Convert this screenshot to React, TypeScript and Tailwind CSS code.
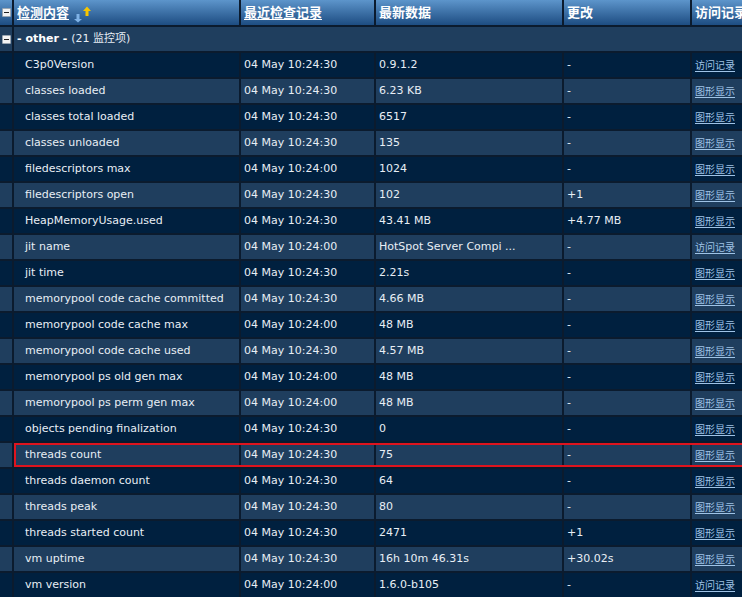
const rows: [string, string, string, string, string][] = [
  ["C3p0Version", "04 May 10:24:30", "0.9.1.2", "-", "访问记录"],
  ["classes loaded", "04 May 10:24:30", "6.23 KB", "-", "图形显示"],
  ["classes total loaded", "04 May 10:24:30", "6517", "-", "图形显示"],
  ["classes unloaded", "04 May 10:24:30", "135", "-", "图形显示"],
  ["filedescriptors max", "04 May 10:24:00", "1024", "-", "图形显示"],
  ["filedescriptors open", "04 May 10:24:30", "102", "+1", "图形显示"],
  ["HeapMemoryUsage.used", "04 May 10:24:30", "43.41 MB", "+4.77 MB", "图形显示"],
  ["jit name", "04 May 10:24:00", "HotSpot Server Compi ...", "-", "访问记录"],
  ["jit time", "04 May 10:24:30", "2.21s", "-", "图形显示"],
  ["memorypool code cache committed", "04 May 10:24:30", "4.66 MB", "-", "图形显示"],
  ["memorypool code cache max", "04 May 10:24:00", "48 MB", "-", "图形显示"],
  ["memorypool code cache used", "04 May 10:24:30", "4.57 MB", "-", "图形显示"],
  ["memorypool ps old gen max", "04 May 10:24:00", "48 MB", "-", "图形显示"],
  ["memorypool ps perm gen max", "04 May 10:24:00", "48 MB", "-", "图形显示"],
  ["objects pending finalization", "04 May 10:24:30", "0", "-", "图形显示"],
  ["threads count", "04 May 10:24:30", "75", "-", "图形显示"],
  ["threads daemon count", "04 May 10:24:30", "64", "-", "图形显示"],
  ["threads peak", "04 May 10:24:30", "80", "-", "图形显示"],
  ["threads started count", "04 May 10:24:30", "2471", "+1", "图形显示"],
  ["vm uptime", "04 May 10:24:30", "16h 10m 46.31s", "+30.02s", "图形显示"],
  ["vm version", "04 May 10:24:00", "1.6.0-b105", "-", "访问记录"],
];

const font = "font-['DejaVu_Sans','Noto_Sans_CJK_SC',sans-serif]";

function Toggle() {
  return (
    <span className="flex h-[9px] w-[9px] items-center justify-center rounded-[1px] border border-[#9aa6b2] bg-[#f4f4f4]">
      <span className="h-[1px] w-[5px] bg-[#222]" />
    </span>
  );
}

function SortArrows() {
  return (
    <svg width="18" height="18" viewBox="0 0 18 18" className="ml-[5px] mt-[2px]">
      <path d="M2.5 9h3v5h2.5L4 17.5 0 14h2.5z" fill="#7fb2e6" />
      <path d="M11.5 11h3V6H17L13 1.5 9 6h2.5z" fill="#f7c600" />
    </svg>
  );
}

export default function App() {
  const th = "flex h-[25px] items-center bg-gradient-to-b from-[#5d95cb] to-[#1d4d82] text-[13px] font-bold text-white";
  return (
    <div className={`h-[597px] w-[742px] overflow-hidden bg-[#0b1b2e] ${font}`}>
      <div className="flex w-[820px] flex-col gap-[2px]">
        {/* header */}
        <div className="flex gap-[2px]">
          <div className={`${th} w-[12px] justify-center`}>
            <Toggle />
          </div>
          <div className={`${th} w-[225px] pl-[3px]`}>
            <span className="underline underline-offset-2">检测内容</span>
            <SortArrows />
          </div>
          <div className={`${th} w-[133px] pl-[3px]`}>
            <span className="underline underline-offset-2">最近检查记录</span>
          </div>
          <div className={`${th} w-[186px] pl-[3px]`}>最新数据</div>
          <div className={`${th} w-[126px] pl-[3px]`}>更改</div>
          <div className={`${th} flex-1 pl-[3px]`}>访问记录</div>
        </div>

        {/* group */}
        <div className="flex h-[24px] gap-[2px] bg-[#0b1b2e]">
          <div className="flex w-[12px] items-center justify-center bg-[#1f3e5e]">
            <Toggle />
          </div>
          <div className="flex flex-1 items-center bg-[#1f3e5e] pl-[3px] text-[11px] text-[#e6edf4]">
            <span className="font-bold text-white">- other -</span>
            <span className="ml-[4px]">(21 监控项)</span>
          </div>
        </div>

        {rows.map((r, i) => {
          const bg = i % 2 === 0 ? "bg-[#00203f]" : "bg-[#1f3e5e]";
          const hl = r[0] === "threads count";
          const td = `flex h-[24px] items-center ${bg} text-[11px] text-[#e8eef5]`;
          return (
            <div key={r[0]} className="flex gap-[2px]">
              <div className={`${td} w-[12px]`} />
              <div className={`flex gap-[2px] ${hl ? "outline-2 -outline-offset-2 outline-[#e0141e]" : ""}`}>
                <div className={`${td} w-[225px] pl-[11px]`}>{r[0]}</div>
                <div className={`${td} w-[133px] pl-[3px]`}>{r[1]}</div>
                <div className={`${td} w-[186px] pl-[3px]`}>{r[2]}</div>
                <div className={`${td} w-[126px] pl-[3px]`}>{r[3]}</div>
                <div className={`${td} w-[126px] pl-[3px]`}>
                  <span className="text-[10px] text-[#9fc3e6] underline underline-offset-2">{r[4]}</span>
                </div>
              </div>
            </div>
          );
        })}
      </div>
    </div>
  );
}
